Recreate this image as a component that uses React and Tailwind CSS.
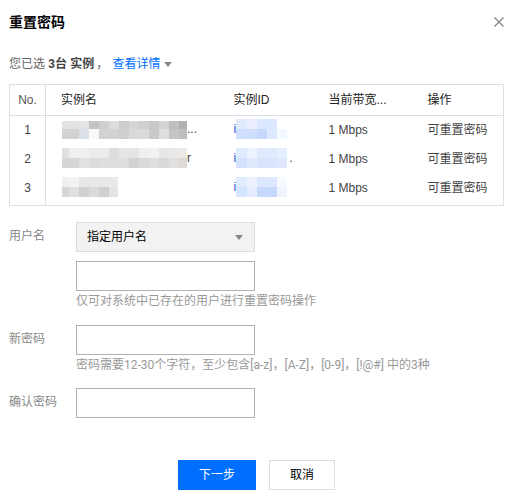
import { useState } from "react";

const INSTANCES = [
  {
    no: 1,
    name: {
      width: 125,
      topHeight: 8,
      top: ["#e2e2e2", "#e3e3e3", "#e4e4e4", "#c3c3c3", "#d0d0d0", "#dcdcdc", "#cccccc", "#d6d6d6", "#d0d0d0", "#c8c8c8", "#d3d3d3", "#bfbfbf", "#b0b0b0"],
      bottom: ["#d2d2d2", "#d2d2d2", "#dce1e7", "#fafafa", "#d2d2d2", "#d2d2d2", "#cfcfcf", "#d8d8d8", "#dadada", "#c9c9c9", "#dedede", "#c4c4c4", "#bebebe"],
    },
    nameTail: "...",
    id: {
      top: ["#dfeaff", "#eceefe", "#dbe8ff", "#dbe8ff"],
      bottom: ["#d0dffe", "#d0dffe", "#c8d8fd", "#dee9ff", "#f2f8ff"],
    },
    idTail: "",
  },
  {
    no: 2,
    name: {
      width: 125,
      top: ["#e0e0e0", "#efefef", "#f0f0f0", "#ebebeb", "#ececec", "#dcdcdc", "#e5e5e5", "#e5e5e5", "#f0f0f0", "#f2f2f2", "#e6e6e6", "#e8e8e8", "#eeeae5"],
      bottom: ["#d6d6d6", "#d6d6d6", "#e1e1e1", "#dcdcdc", "#dedede", "#dedede", "#dedede", "#d2d2d2", "#d9d9d9", "#dedede", "#d9d9d9", "#e0e0e0", "#dedad7"],
    },
    nameTail: "r",
    id: {
      top: ["#dfebff", "#ecf2fe", "#dfeaff", "#dfeaff", "#e5f0fe"],
      bottom: ["#d4e2fe", "#e1e9fd", "#dbe4fd", "#dbe4fd", "#dfe8fd"],
    },
    idTail: ".",
  },
  {
    no: 3,
    name: {
      width: 56,
      top: ["#efefef", "#f2f2f2", "#e7e7e7", "#e8e8e8", "#e8e8e8", "#e9e9e9"],
      bottom: ["#d6d6d6", "#e0e0e0", "#d0d0d0", "#dadada", "#cfcfcf", "#e3e3e3"],
    },
    nameTail: "",
    id: {
      top: ["#e0ebff", "#eef1fe", "#dbe8ff", "#dbe8ff", "#f6faff"],
      bottom: ["#d4e3ff", "#e6edfe", "#c6d9fd", "#c6d9fd", "#eef3fe"],
    },
    idTail: "",
  },
];

function Mosaic({ width, firstCell, topHeight = 10, top, bottom }) {
  const cells = (colors, y, height) =>
    colors.map((fill, i) => (
      <rect
        key={`${y}-${i}`}
        x={i === 0 ? 0 : firstCell + (i - 1) * 10}
        y={y}
        width={i === 0 ? firstCell : 10}
        height={height}
        fill={fill}
      />
    ));
  return (
    <svg width={width} height="20" shapeRendering="crispEdges" aria-hidden="true" className="shrink-0">
      {cells(top, 10 - topHeight, topHeight)}
      {cells(bottom, 10, 10)}
    </svg>
  );
}

function Caret({ className }) {
  return (
    <svg width="8" height="5" viewBox="0 0 8 5" aria-hidden="true" className={className}>
      <path d="M0 0h8L4 5z" fill="#888888" />
    </svg>
  );
}

function Field({ id, label, children }) {
  return (
    <div className="flex items-start">
      <label htmlFor={id} className="w-[67px] shrink-0 leading-7 text-[#888888]">
        {label}
      </label>
      <div className="min-w-0 flex-1">{children}</div>
    </div>
  );
}

const inputClass = "block h-[30px] w-[179px] border border-[#b2b2b2] bg-white px-2.5 text-black outline-none";
const hintClass = "font-[Roboto,'Noto_Sans_CJK_SC',sans-serif] leading-5 text-[#999999]";

export default function App() {
  const [mode, setMode] = useState("custom");

  return (
    <main className="bg-white pt-2.5 pr-[13px] pb-2.5 pl-[9px] font-['Liberation_Sans','Noto_Sans_CJK_SC',sans-serif] text-[12px] leading-5 text-[#444444]">
      <header className="flex h-6 items-center justify-between">
        <h1 className="text-[14px] font-bold text-black">重置密码</h1>
        <button type="button" aria-label="关闭" className="block">
          <svg width="10" height="10" viewBox="0 0 10 10" fill="none" stroke="#888888" strokeWidth="1.4">
            <path d="M.5.5l9 9M9.5.5l-9 9" />
          </svg>
        </button>
      </header>

      <div className="mt-5 flex items-center">
        <p className="whitespace-pre text-[#666666]">
          您已选 <span className="mr-0.5 font-bold text-[#444444]">3台 实例</span>，
        </p>
        <button type="button" className="ml-1 flex items-center gap-1 text-[#006eff]">
          查看详情
          <Caret />
        </button>
      </div>

      <table className="mt-2.5 w-full table-fixed border-collapse border border-[#dcdfe6] text-left">
        <colgroup>
          <col className="w-[36px]" />
          <col className="w-[173px]" />
          <col className="w-[95px]" />
          <col className="w-[99px]" />
          <col />
        </colgroup>
        <thead>
          <tr className="h-[31px] border-b border-[#dcdfe6] text-[#222222]">
            <th className="border-r border-[#dcdfe6] text-center font-normal text-[#555555]">No.</th>
            <th className="pl-[15px] font-normal">实例名</th>
            <th className="pl-[15px] font-normal">实例ID</th>
            <th className="pl-[15px] font-normal">当前带宽...</th>
            <th className="pl-[15px] font-normal">操作</th>
          </tr>
        </thead>
        <tbody>
          {INSTANCES.map((row) => (
            <tr key={row.no} className="h-[29px] align-top leading-[29px] last:h-[31px]">
              <td className="border-r border-[#dcdfe6] text-center">{row.no}</td>
              <td className="pl-4">
                <div className="flex h-[26px] items-center">
                  <Mosaic firstCell={7} {...row.name} />
                  <span>{row.nameTail}</span>
                </div>
              </td>
              <td className="pl-[15px]">
                <div className="flex h-[26px] items-center">
                  <span className="text-[#2b55d9]">i</span>
                  <Mosaic width={51} firstCell={11} {...row.id} />
                  <span className="ml-0.5">{row.idTail}</span>
                </div>
              </td>
              <td className="pl-[15px]">1 Mbps</td>
              <td className="pl-[15px]">可重置密码</td>
            </tr>
          ))}
        </tbody>
      </table>

      <form className="mt-4" onSubmit={(e) => e.preventDefault()}>
        <Field id="user-mode" label="用户名">
          <div className="relative w-[179px]">
            <select
              id="user-mode"
              value={mode}
              onChange={(e) => setMode(e.target.value)}
              className="block h-[30px] w-full appearance-none border border-[#dddddd] bg-[#f2f2f2] px-2.5 text-black outline-none"
            >
              <option value="custom">指定用户名</option>
            </select>
            <Caret className="pointer-events-none absolute top-[13px] right-3" />
          </div>
          <input type="text" aria-label="指定用户名" className={`mt-[9px] ${inputClass}`} />
          <p className={hintClass}>仅可对系统中已存在的用户进行重置密码操作</p>
        </Field>

        <div className="mt-3.5">
          <Field id="new-password" label="新密码">
            <input id="new-password" type="password" className={inputClass} />
            <p className={hintClass}>密码需要12-30个字符，至少包含[a-z]，[A-Z]，[0-9]，[!@#] 中的3种</p>
          </Field>
        </div>

        <div className="mt-[13px]">
          <Field id="confirm-password" label="确认密码">
            <input id="confirm-password" type="password" className={inputClass} />
          </Field>
        </div>

        <div className="mt-[42px] flex justify-center gap-[13px]">
          <button type="submit" className="h-[30px] w-[78px] bg-[#006eff] text-white">
            下一步
          </button>
          <button type="button" className="h-[30px] w-[66px] border border-[#dddddd] bg-white text-black">
            取消
          </button>
        </div>
      </form>
    </main>
  );
}
